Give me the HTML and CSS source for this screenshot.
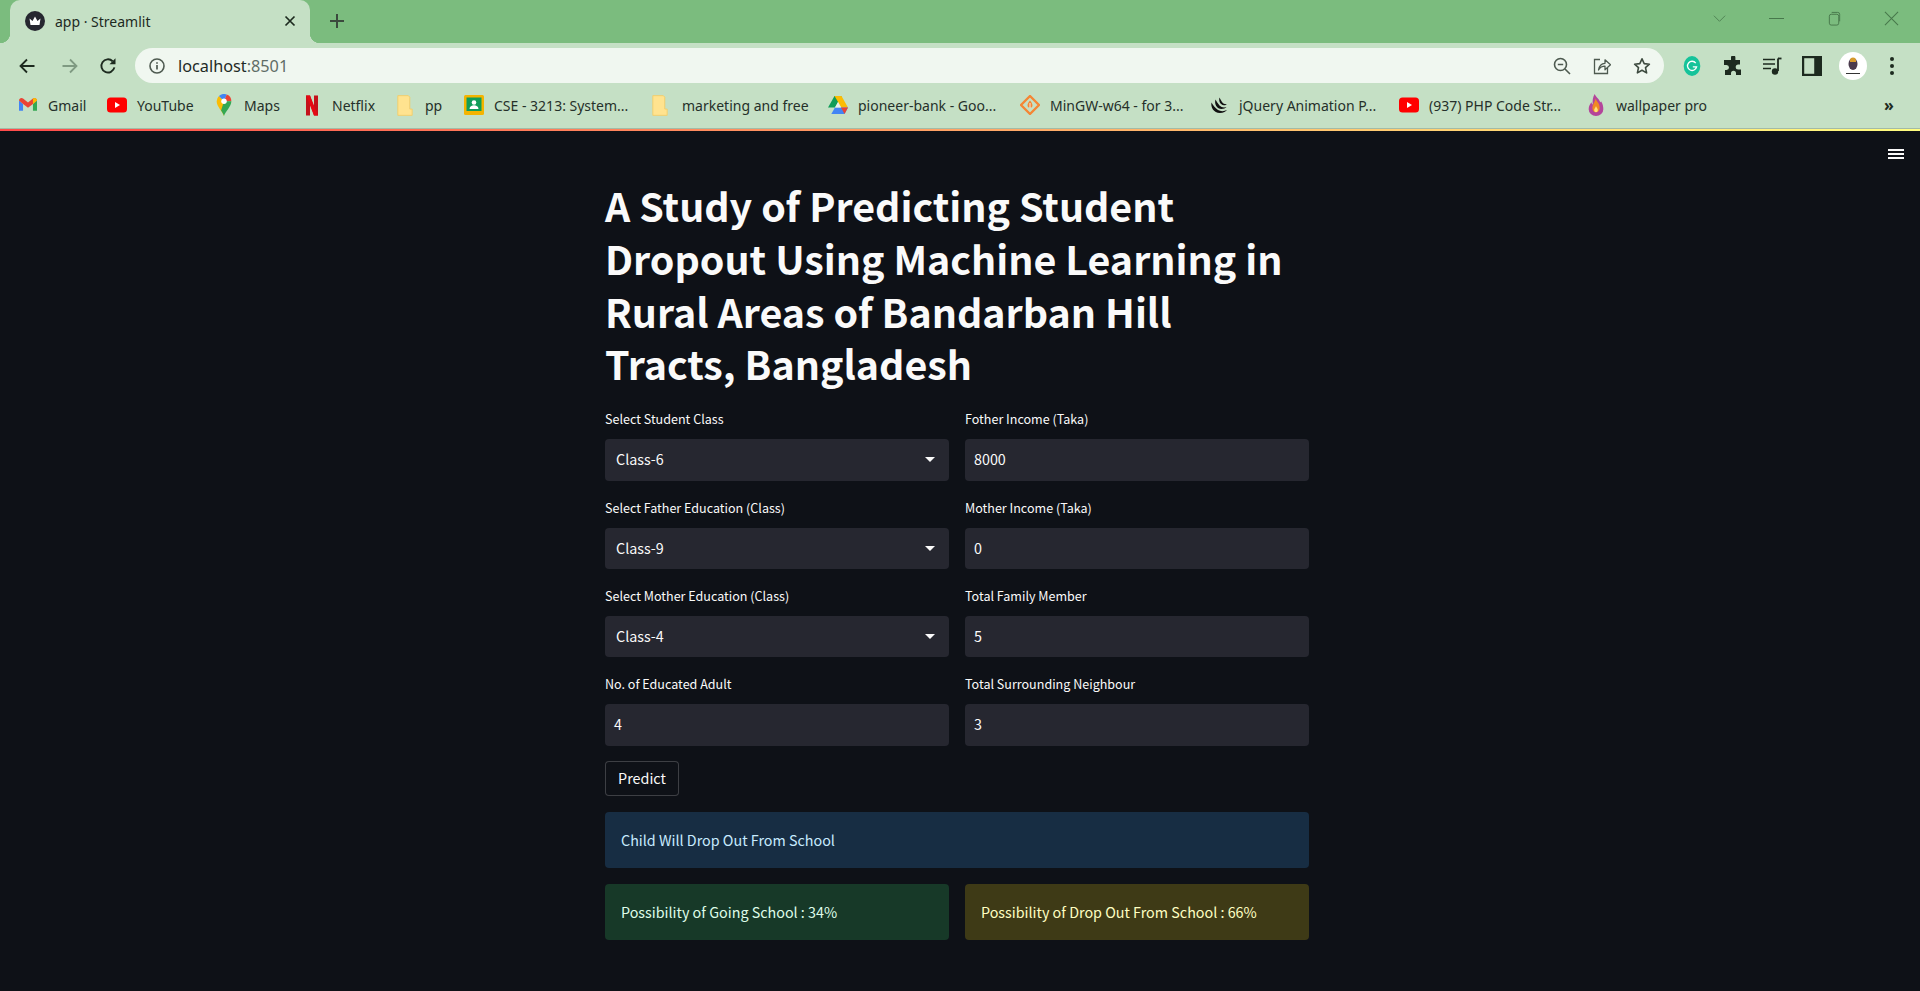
FILE: index.html
```html
<!DOCTYPE html>
<html lang="en">
<head>
<meta charset="utf-8">
<title>app · Streamlit</title>
<link rel="stylesheet" href="styles.css">
</head>
<body>
<div class="browser">
  <div class="tabstrip">
    <div class="tab">
      <svg class="tab-icon" viewBox="0 0 20 20"><circle cx="10" cy="10" r="10" fill="#262730"/><path d="M4.5 7.5l3 2.4L10 5.5l2.5 4.4 3-2.4-1 6.5h-9z" fill="#fff"/></svg>
      <span class="tab-title">app · Streamlit</span>
      <svg class="tab-close" viewBox="0 0 12 12"><path d="M1.5 1.5l9 9M10.5 1.5l-9 9" stroke="#1d2a1f" stroke-width="1.7" fill="none"/></svg>
    </div>
    <svg class="new-tab" viewBox="0 0 16 16"><path d="M8 1v14M1 8h14" stroke="#3b4a3d" stroke-width="2" fill="none"/></svg>
    <div class="window-controls">
      <svg viewBox="0 0 16 16"><path d="M2 5l6 6 6-6" stroke="#4f8153" stroke-width="1" fill="none"/></svg>
      <svg viewBox="0 0 16 16"><path d="M0 8h16" stroke="#47784b" stroke-width="1.100" fill="none"/></svg>
      <svg viewBox="0 0 16 16"><rect x="2.5" y="3.5" width="10" height="11.500" rx="2" stroke="#47784b" fill="none"/><path d="M5 1.500h6.500a2 2 0 0 1 2 2V11" stroke="#47784b" fill="none"/></svg>
      <svg viewBox="0 0 16 16"><path d="M1 1l14 14M15 1L1 15" stroke="#47784b" stroke-width="1.100" fill="none"/></svg>
    </div>
  </div>

  <div class="toolbar">
    <div class="slot slot-back"><svg class="i18" viewBox="0 0 18 18"><path d="M16.5 9H2.5M9 2.5L2.5 9 9 15.5" stroke="#1d2a1f" stroke-width="1.8" fill="none"/></svg></div>
    <div class="slot slot-forward"><svg class="i18" viewBox="0 0 18 18"><path d="M1.5 9h14M9 2.5L15.5 9 9 15.5" stroke="#7f9a82" stroke-width="1.8" fill="none"/></svg></div>
    <div class="slot slot-reload"><svg class="i18" viewBox="0 0 18 18"><path d="M15.4 10.4A6.6 6.6 0 1 1 13.6 4.2" stroke="#1d2a1f" stroke-width="1.9" fill="none"/><path d="M16.5 1.2v6h-6z" fill="#1d2a1f"/></svg></div>
    <div class="address">
      <svg class="info" viewBox="0 0 16 16"><circle cx="8" cy="8" r="7" stroke="#4e5a50" stroke-width="1.6" fill="none"/><path d="M8 7v4.5M8 4.2v1.6" stroke="#4e5a50" stroke-width="1.7" fill="none"/></svg>
      <span class="url">localhost<span class="url-port">:8501</span></span>
      <div class="address-actions">
        <div class="slot"><svg class="i18" viewBox="0 0 18 18"><circle cx="7.5" cy="7.5" r="6" stroke="#4e5a50" stroke-width="1.6" fill="none"/><path d="M4.8 7.5h5.4M12 12l5 5" stroke="#4e5a50" stroke-width="1.6" fill="none"/></svg></div>
        <div class="slot"><svg class="i18" viewBox="0 0 18 18"><path d="M7 2.5H1.500v14h13V11" stroke="#4e5a50" stroke-width="1.3" fill="none"/><path d="M5.500 13c.6-4 3.400-6.500 6.500-6.700V2.800l5.500 5-5.500 5V9.200c-2.600 0-5 1.200-6.500 3.800z" stroke="#4e5a50" stroke-width="1.3" fill="none" stroke-linejoin="round"/></svg></div>
        <div class="slot"><svg class="i18" viewBox="0 0 18 18"><path d="M9 1.800l2.200 4.800 5.200.6-3.900 3.500 1.100 5.200L9 13.300l-4.600 2.600 1.100-5.200L1.600 7.200l5.200-.6z" stroke="#3d4a3f" stroke-width="1.600" fill="none" stroke-linejoin="round"/></svg></div>
      </div>
    </div>
    <div class="extensions">
      <div class="slot"><svg class="i20" viewBox="0 0 20 24"><ellipse cx="10" cy="12" rx="10" ry="12" fill="#15c39a"/><path d="M14.500 8.500A5.500 5.500 0 1 0 15.500 13h-4.500" stroke="#fff" stroke-width="1.600" fill="none"/></svg></div>
      <div class="slot"><svg class="i20" viewBox="0 0 20 20"><path d="M8 1.500a2.200 2.200 0 0 1 4.400 0V4H17v4.500h-1.800a2.500 2.500 0 0 0 0 5H18V19h-5v-1.800a2.500 2.500 0 0 0-5 0V19H2v-5h1.500a2.500 2.500 0 0 0 0-5H1V4h7z" fill="#1d2a1f"/></svg></div>
      <div class="slot"><svg class="i20" viewBox="0 0 20 20"><path d="M1 3.500h12M1 8h12M1 12.500h8" stroke="#1d2a1f" stroke-width="1.600" fill="none"/><path d="M16 2.500V15" stroke="#1d2a1f" stroke-width="1.800" fill="none"/><path d="M16 2.500h3.500" stroke="#1d2a1f" stroke-width="1.800" fill="none"/><circle cx="13" cy="15.500" r="3.200" fill="#1d2a1f"/></svg></div>
      <div class="slot"><svg class="i20" viewBox="0 0 18 18"><rect x="1" y="1" width="16" height="16" fill="none" stroke="#1d2a1f" stroke-width="2"/><rect x="11" y="1" width="6" height="16" fill="#1d2a1f"/></svg></div>
      <div class="slot"><div class="avatar"><svg class="avatar-art" viewBox="0 0 14 20"><ellipse cx="7" cy="8" rx="4.500" ry="6" fill="#4a3a4c"/><path d="M4 4.500a3 3 0 0 1 6 0v1.500H4z" fill="#d79a2b"/><path d="M0 17.500h14" stroke="#333" stroke-width="1"/></svg></div></div>
      <div class="slot"><svg class="i20" viewBox="0 0 20 20"><circle cx="10" cy="3" r="2" fill="#1d2a1f"/><circle cx="10" cy="10" r="2" fill="#1d2a1f"/><circle cx="10" cy="17" r="2" fill="#1d2a1f"/></svg></div>
    </div>
  </div>

  <div class="bookmarks">
    <div class="bm"><span class="bm-slot"><svg class="b18" viewBox="0 0 20 16"><path d="M0 3v11.500h4.500V7z" fill="#4285f4"/><path d="M15.500 7v7.500H20V3z" fill="#34a853"/><path d="M0 3c0-2.500 2.800-3.800 4.500-2.200L10 5.200l5.500-4.400C17.200-.8 20 .5 20 3l-4.500 4L10 11 4.500 7z" fill="#ea4335"/><path d="M15.500 .8C17.200-.8 20 .5 20 3l-4.500 4z" fill="#fbbc04"/></svg></span><span class="bm-text">Gmail</span></div>
    <div class="bm"><span class="bm-slot"><svg class="b20" viewBox="0 0 20 15"><rect width="20" height="15" rx="3.500" fill="#f00"/><path d="M8 4.500v6l5-3z" fill="#fff"/></svg></span><span class="bm-text">YouTube</span></div>
    <div class="bm"><span class="bm-slot"><svg class="b22" viewBox="0 0 16 24"><path d="M8 24C6.500 19 0 14 0 8a8 8 0 0 1 2.500-5.800L8 8z" fill="#fbbc04"/><path d="M2.500 2.200A8 8 0 0 1 11 .6L8 8z" fill="#4285f4"/><path d="M11 .6A8 8 0 0 1 16 8l-8 0z" fill="#ea4335"/><path d="M16 8c0 6-6.500 11-8 16-.6-2-2-4-3.200-6L8 8z" fill="#34a853"/><circle cx="8" cy="8" r="3" fill="#fff"/></svg></span><span class="bm-text">Maps</span></div>
    <div class="bm"><span class="bm-slot"><svg class="b22n" viewBox="0 0 12 20"><path d="M0 0h4l4 12V0h4v20H8L4 8v12H0z" fill="#c4111b"/><path d="M0 0h4l8 20H8z" fill="#e50914"/></svg></span><span class="bm-text">Netflix</span></div>
    <div class="bm"><span class="bm-slot"><svg class="folder" viewBox="0 0 16 22"><path d="M.5 .7h11l1.500 1.500v12.500h2.500v6.600H.5z" fill="#ffe38f" stroke="#f2ce6b"/></svg></span><span class="bm-text">pp</span></div>
    <div class="bm"><span class="bm-slot"><svg class="b20" viewBox="0 0 20 20"><rect width="20" height="20" rx="1.500" fill="#f4b400"/><rect x="2.500" y="2.500" width="15" height="13.500" fill="#0f9d58"/><circle cx="10" cy="7.500" r="2.300" fill="#fff"/><path d="M5.500 14c0-5 9-5 9 0z" fill="#fff"/></svg></span><span class="bm-text">CSE - 3213: System...</span></div>
    <div class="bm"><span class="bm-slot bm-slot-start"><svg class="folder" viewBox="0 0 16 22"><path d="M.5 .7h11l1.500 1.500v12.500h2.500v6.600H.5z" fill="#ffe38f" stroke="#f2ce6b"/></svg></span><span class="bm-text">marketing and free</span></div>
    <div class="bm"><span class="bm-slot"><svg class="b20" viewBox="0 0 20 18"><path d="M6.500 0h7l-6.500 11.500H0z" fill="#0f9d58"/><path d="M6.500 0l3.500 6 3.500-6z" fill="#00832d" opacity=".5"/><path d="M13.500 0L20 11.500h-6.700L6.500 0z" fill="#fbbc04"/><path d="M3.300 18L7 11.500h13L16.500 18z" fill="#4285f4"/><path d="M20 11.500L16.500 18l-3.500-6.500z" fill="#ea4335"/><path d="M7 11.500h6L10 6z" fill="#e8f2ea"/></svg></span><span class="bm-text">pioneer-bank - Goo...</span></div>
    <div class="bm"><span class="bm-slot"><svg class="b20" viewBox="0 0 20 20"><path d="M10 1l9 9-9 9-9-9z" fill="none" stroke="#f58634" stroke-width="2.400" stroke-linejoin="round"/><path d="M10 5.500c1.500 2 2.500 3.200 2.500 4.800a2.500 2.500 0 0 1-5 0C7.500 8.700 8.500 7.500 10 5.500z" fill="#f58634"/><path d="M10 8v5" stroke="#fff" stroke-width=".8"/></svg></span><span class="bm-text">MinGW-w64 - for 3...</span></div>
    <div class="bm"><span class="bm-slot"><svg class="b18" viewBox="0 0 18 18"><path d="M1.500 6.500C.5 11 3.500 17 10 17c3.500 0 6-1.500 7-3-3 1.500-6.500 1.500-9 0-3-2-5-5-6.500-7.500z" fill="#111"/><path d="M5.500 3.500C4 8 7 13 11.500 13c2 0 4-.8 5-2-2.500.8-5 .5-7-1.500-1.600-1.800-3-4-4-6z" fill="#111"/><path d="M9.500 1.500C8.500 4.500 10 9 14 9.200c1.300 0 2.500-.5 3-1-2 .3-3.800-.5-5-2.200-.9-1.300-1.800-3-2.500-4.500z" fill="#111"/></svg></span><span class="bm-text">jQuery Animation P...</span></div>
    <div class="bm"><span class="bm-slot"><svg class="b20" viewBox="0 0 20 15"><rect width="20" height="15" rx="3.500" fill="#f00"/><path d="M8 4.500v6l5-3z" fill="#fff"/></svg></span><span class="bm-text">(937) PHP Code Str...</span></div>
    <div class="bm"><span class="bm-slot"><svg class="b22" viewBox="0 0 16 24"><path d="M6.500 0c1 3 4 4.500 5.500 7.500 1 2 1 2 1.500.5 2 3 2.500 6 2.500 8.500A8 7.500 0 0 1 0 16.500C0 13 1.500 11 3 9c.3 1.500.8 2 1.500 2.500C4 7.500 4.500 3.500 6.500 0z" fill="#b4459b"/><path d="M7.500 5c.5 2.500 4.500 5 4.500 10a4 5 0 0 1-8 0c0-3 3-6 3.500-10z" fill="#f08a24"/><path d="M8 13c.3 1.500 2 2.500 2 4.500a2 2.500 0 0 1-4 0c0-1.800 1.800-3 2-4.500z" fill="#ffe27a"/></svg></span><span class="bm-text">wallpaper pro</span></div>
    <div class="bm-more">»</div>
  </div>
  <div class="chrome-edge"></div>
  <div class="decoration"></div>
</div>

<main class="app">
  <svg class="menu" viewBox="0 0 16 10"><path d="M0 1h16M0 5h16M0 9h16" stroke="#fafafa" stroke-width="2"/></svg>
  <div class="content">
    <h1 class="title">A Study of Predicting Student Dropout Using Machine Learning in Rural Areas of Bandarban Hill Tracts, Bangladesh</h1>
    <div class="form-grid">
      <div class="field"><label class="label">Select Student Class</label><div class="control select"><span>Class-6</span><i class="caret"></i></div></div>
      <div class="field"><label class="label">Fother Income (Taka)</label><div class="control number"><span>8000</span></div></div>
      <div class="field"><label class="label">Select Father Education (Class)</label><div class="control select"><span>Class-9</span><i class="caret"></i></div></div>
      <div class="field"><label class="label">Mother Income (Taka)</label><div class="control number"><span>0</span></div></div>
      <div class="field"><label class="label">Select Mother Education (Class)</label><div class="control select"><span>Class-4</span><i class="caret"></i></div></div>
      <div class="field"><label class="label">Total Family Member</label><div class="control number"><span>5</span></div></div>
      <div class="field"><label class="label">No. of Educated Adult</label><div class="control number"><span>4</span></div></div>
      <div class="field"><label class="label">Total Surrounding Neighbour</label><div class="control number"><span>3</span></div></div>
    </div>
    <button class="predict" type="button">Predict</button>
    <div class="alert alert-info">Child Will Drop Out From School</div>
    <div class="alert-row">
      <div class="alert alert-success">Possibility of Going School : 34%</div>
      <div class="alert alert-warning">Possibility of Drop Out From School : 66%</div>
    </div>
  </div>
</main>
</body>
</html>
```

FILE: styles.css
```css
* { box-sizing: border-box; }
html, body { margin: 0; height: 100%; }
body {
  width: 1920px;
  height: 991px;
  overflow: hidden;
  background: #0e1117;
  display: flex;
  flex-direction: column;
  font-family: "Noto Sans CJK SC", "Noto Sans", sans-serif;
}
svg { display: block; flex: none; }

/* Browser chrome */
.browser { flex: none; font-family: "Noto Sans", "Open Sans", sans-serif; color: #1d2a1f; }
.tabstrip {
  height: 43px;
  background: #7bbc7e;
  display: flex;
  align-items: flex-start;
  padding-left: 10px;
}
.tab {
  position: relative;
  width: 300px;
  height: 43px;
  background: #c5e0c5;
  border-radius: 10px 10px 0 0;
  display: flex;
  align-items: center;
  padding: 0 0 1px 15px;
}
.tab::before, .tab::after {
  content: "";
  position: absolute;
  bottom: 0;
  width: 10px;
  height: 10px;
}
.tab::before { left: -10px; background: radial-gradient(circle at 0 0, transparent 10px, #c5e0c5 10.5px); }
.tab::after { right: -10px; background: radial-gradient(circle at 100% 0, transparent 10px, #c5e0c5 10.5px); }
.tab-icon { width: 20px; height: 20px; }
.tab-title { margin-left: 10px; font-size: 14px; flex: 1; }
.tab-close { width: 12px; height: 12px; margin-right: 14px; }
.new-tab { width: 16px; height: 16px; margin: 13px 0 0 19px; }
.window-controls {
  margin-left: auto;
  display: grid;
  grid-template-columns: repeat(4, 15px);
  column-gap: 42.500px;
  padding: 11px 21px 0 0;
}
.window-controls svg { width: 15px; height: 15px; }

.toolbar {
  height: 45px;
  background: #c5e0c5;
  display: flex;
  align-items: center;
  padding-left: 6px;
}
.slot { display: flex; align-items: center; justify-content: center; height: 35px; }
.slot-back { width: 42px; }
.slot-forward { width: 44px; }
.slot-reload { width: 32px; }
.i18 { width: 18px; height: 18px; }
.i20 { width: 20px; height: 20px; }
.address {
  width: 1529px;
  height: 35px;
  margin-left: 11px;
  border-radius: 18px;
  background: #f0f7f0;
  display: flex;
  align-items: center;
  padding: 0 2px 0 14px;
}
.info { width: 16px; height: 16px; }
.url { margin-left: 13px; font-size: 16.250px; color: #1f2a26; }
.url-port { color: #5f6d66; }
.address-actions { margin-left: auto; display: grid; grid-template-columns: repeat(3, 40px); }
.extensions {
  margin-left: 8px;
  display: grid;
  grid-template-columns: 40px 42px 36px 44px 38px 40px;
}
.avatar {
  width: 28px;
  height: 28px;
  border-radius: 50%;
  background: #fff;
  display: flex;
  align-items: center;
  justify-content: center;
}
.avatar-art { width: 14px; height: 20px; }

.bookmarks {
  height: 40px;
  background: #c5e0c5;
  display: grid;
  grid-template-columns: 89px 107px 88px 93px 69px 188px 176px 192px 189px 190px 187px 1fr 40px;
  align-items: center;
  padding: 0 0 6px 18px;
}
.bm { display: flex; align-items: center; white-space: nowrap; }
.bm-slot { width: 20px; height: 24px; display: flex; align-items: center; justify-content: center; margin-right: 10px; }
.bm-slot-start { justify-content: flex-start; }
.bm-text { font-size: 14px; color: #25302a; }
.b18 { width: 18px; height: 18px; }
.b20 { width: 20px; height: 20px; }
.b22 { width: 16px; height: 22px; }
.b22n { width: 12px; height: 21px; }
.folder { width: 16px; height: 21px; }
.bm-more { font-size: 16px; font-weight: 700; padding-left: 4px; }
.chrome-edge { height: 1px; background: #a3bba6; }
.decoration { height: 2px; background: linear-gradient(90deg, #ff4b4b, #fffd80); }

/* Streamlit app */
.app {
  position: relative;
  flex: 1;
  display: flex;
  justify-content: center;
  padding: 50px 6px 0 0;
  color: #fafafa;
}
.menu { position: absolute; top: 18px; right: 16px; width: 16px; height: 10px; }
.content { width: 704px; display: flex; flex-direction: column; gap: 16px; }
.title {
  margin: -2px 0 2px;
  font-size: 39.400px;
  line-height: 52.800px;
  font-weight: 700;
  color: #fafafa;
}
.form-grid { display: grid; grid-template-columns: 344px 344px; column-gap: 16px; row-gap: 16px; margin-bottom: -.6px; }
.field { display: flex; flex-direction: column; }
.label { font-size: 12.550px; line-height: 22px; margin-bottom: 9px; color: #fafafa; }
.control {
  height: 41.330px;
  border-radius: 4px;
  background: #262730;
  display: flex;
  align-items: center;
  font-size: 14.340px;
  color: #fafafa;
  padding-bottom: 2px;
}
.select { padding-left: 11px; padding-right: 14px; justify-content: space-between; }
.number { padding-left: 9px; }
.caret {
  width: 0;
  height: 0;
  border-left: 5px solid transparent;
  border-right: 5px solid transparent;
  border-top: 5px solid #fafafa;
  margin-top: 2px;
}
.predict {
  align-self: flex-start;
  width: 74px;
  height: 35px;
  padding: 0;
  border: 1px solid rgba(250, 250, 250, .2);
  border-radius: 4px;
  background: #0e1117;
  color: #fafafa;
  font: 14.340px/1 "Noto Sans CJK SC", "Noto Sans", sans-serif;
}
.alert {
  height: 56px;
  border-radius: 4px;
  padding: 0 16px;
  display: flex;
  align-items: center;
  font-size: 14.340px;
}
.alert-info { background: #172d43; color: #c7ebff; }
.alert-success { background: #173928; color: #dffde9; }
.alert-warning { background: #3e3a16; color: #ffffc2; }
.alert-row { display: grid; grid-template-columns: 344px 344px; column-gap: 16px; }
```
